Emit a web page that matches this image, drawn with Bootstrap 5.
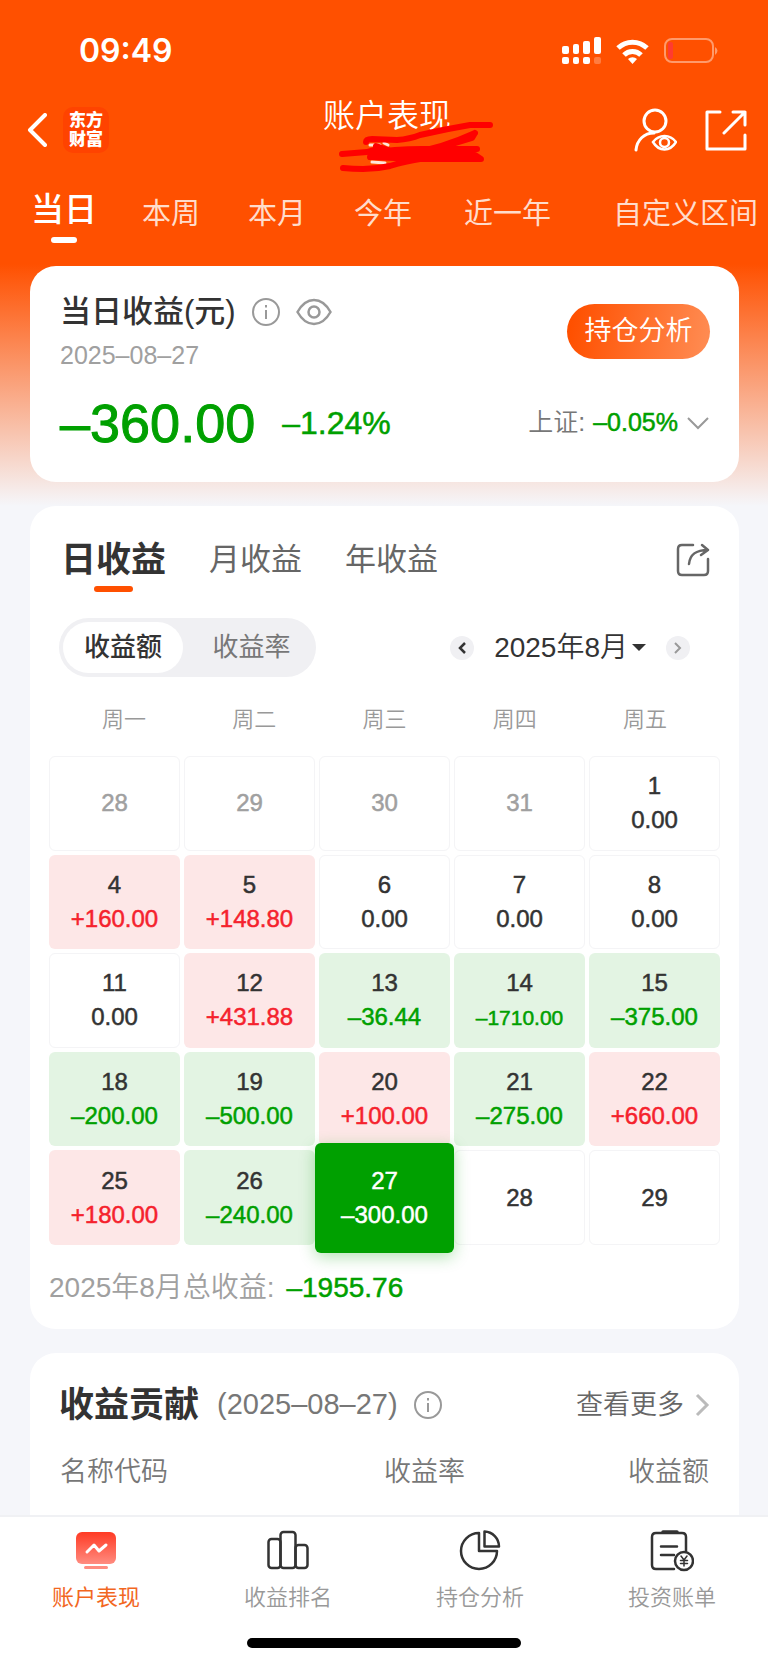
<!DOCTYPE html>
<html lang="zh-CN">
<head>
<meta charset="utf-8">
<meta name="viewport" content="width=device-width, initial-scale=1">
<title>账户表现</title>
<link href="https://cdn.jsdelivr.net/npm/bootstrap@5.3.0/dist/css/bootstrap.min.css" rel="stylesheet">
<style>
  :root { --brand:#ff5000; --up:#f5222d; --down:#00a000; --ink:#333; --soft:#777; --mute:#a0a0a0; }
  body { font-family:"Liberation Sans","Noto Sans CJK SC",sans-serif; color:var(--ink); background:#f5f6fa; }
  svg { display:block; flex:none; fill:none; stroke:currentColor; }
  svg.tone-mid { color:#999; }
  svg.tone-pale { color:#bbb; }
  svg.tone-red { color:#f00; }
  button, .page a { color:inherit; background:none; border:0; padding:0; text-decoration:none; }
  .page { background:linear-gradient(180deg,var(--brand) 0,var(--brand) 264px,#f5f6fa 506px); }

  .status { height:102px; padding:0 50px 0 79px; }
  .signals { gap:15px; }
  .signals .cell-bars { stroke:none; fill:#fff; }
  .clock { font:600 32px/40px Inter,sans-serif; }
  .titlebar { height:88px; padding:0 21px 0 27px; margin-top:-16px; }
  .brand-logo { width:46px; height:46px; border-radius:10px; background:#ff4300; font-weight:900; font-size:17px; line-height:19px; }
  .page-title { font-size:32px; line-height:40px; font-weight:350; }
  .subtitle { height:28px; position:relative; }
  .subtitle svg { position:absolute; left:50%; top:-18px; margin-left:-49px; }

  .range { padding:14px 7px 23px 31px; gap:42px; font-size:29px; line-height:40px; font-weight:350; }
  .range button { padding:0 3px 4px; color:#ffdccb; }
  .range button.active { padding:2px 0 0; color:#fff; font-size:33px; font-weight:500; }
  .bar-mark { height:6px; border-radius:3px; background:currentColor; }
  .range .bar-mark { width:26px; margin:7px auto 0; }

  .panel { background:#fff; border-radius:26px; }
  .panels { padding:0 29px 0 30px; gap:24px; }
  .fs-date { font-size:25px; line-height:30px; color:var(--mute); }
  .down { color:var(--down); }
  .firm { -webkit-text-stroke:1px currentColor; }
  .semi { -webkit-text-stroke:.5px currentColor; }
  .summary { padding:26px 29px 27px 30px; }
  .summary h1 { font-size:31px; line-height:40px; font-weight:500; }
  .summary .figures { margin-top:21px; gap:27px; }
  .summary .total { font-size:54px; line-height:64px; }
  .summary .rate { font-size:32px; }
  .summary .index { font-size:25px; font-weight:350; color:var(--soft); }
  .summary .cta { width:143px; height:55px; border-radius:28px; color:#fff; font-size:27px; font-weight:350; background:linear-gradient(100deg,var(--brand) 5%,#ff8a50 95%); }

  .calendar { padding:32px 19px 20px; }
  .kind { padding:0 10px 0 12px; gap:43px; font-size:31px; line-height:44px; color:#666; font-weight:350; }
  .kind .active { font-size:35px; font-weight:700; color:var(--ink); }
  .kind .bar-mark { width:39px; margin:4px auto 0; background:var(--brand); }
  .controls { padding:26px 30px 0 10px; }
  .switch { width:257px; height:59px; padding:4px; border-radius:30px; background:#f0f0f3; font-size:26px; color:var(--soft); font-weight:350; }
  .switch .active { width:120px; background:#fff; border-radius:26px; color:var(--ink); font-weight:500; }
  .month { font-size:28px; line-height:40px; font-weight:350; }
  .step { width:24px; height:24px; border-radius:50%; background:#f0f0f3 !important; }
  .week { padding:27px 10px 0; font-size:22px; line-height:32px; color:#999; font-weight:350; }
  .week, .days { display:grid; grid-template-columns:repeat(5,1fr); }
  .days { margin-top:20px; height:489px; gap:4px; grid-auto-rows:1fr; font-size:24px; line-height:34px; }
  .days button { border-radius:6px; -webkit-text-stroke:.5px currentColor; }
  .days .flat { border:1px solid #f4f4f6; }
  .days .other { color:var(--mute); }
  .days .gain { background:#fde7e7; }
  .days .loss { background:#e3f4e3; }
  .days .gain span { color:var(--up); }
  .days .loss span { color:var(--down); }
  .days .tight span { font-size:21px; }
  .days .today { background:var(--down); color:#fff; margin:-7px -4px -8px; z-index:1; box-shadow:0 4px 16px rgba(0,160,0,.3); }
  .sum-line { font-size:28px; line-height:42px; margin-top:22px; color:var(--mute); font-weight:350; }

  .contrib { padding:30px 29px 20px 29px; border-radius:26px 26px 0 0; }
  .contrib h2 { font-size:35px; line-height:44px; font-weight:700; }
  .contrib .when { font-size:29px; color:var(--soft); margin-left:18px; }
  .contrib .more { font-size:27px; color:#666; font-weight:350; }
  .contrib table { font-size:27px; line-height:40px; color:var(--soft); margin-top:24px; table-layout:fixed; }
  .contrib th { font-weight:350; }
  .contrib th.mid { padding-left:108px; }

  .tabbar { background:#fff; border-top:2px solid #f0f1f4; padding:11px 0 16px; }
  .tabbar a { font-size:22px; line-height:32px; color:#999; font-weight:350; gap:10px; }
  .tabbar a svg { color:#333; }
  .tabbar a.active { color:#f2671f; font-weight:400; }
  .home-bar { width:274px; height:10px; border-radius:5px; background:#000; margin:24px auto 0; }
</style>
</head>
<body>
<div class="page min-vh-100 d-flex flex-column">
  <header class="text-white">
    <div class="status d-flex align-items-center justify-content-between">
      <span class="clock">09:49</span>
      <div class="signals d-flex align-items-center">
        <svg class="cell-bars" width="39" height="28" viewBox="0 0 39 28"><rect x="0" y="9" width="7" height="8" rx="2"/><rect x="11" y="7" width="6" height="10" rx="2"/><rect x="21" y="4" width="7" height="13" rx="2"/><rect x="32" y="0" width="7" height="17" rx="2"/><rect x="0" y="20" width="7" height="7" rx="2"/><rect x="11" y="20" width="6" height="7" rx="2"/><rect x="21" y="20" width="7" height="7" rx="2"/><rect x="32" y="20" width="7" height="7" rx="2" opacity=".25"/></svg>
        <svg width="33" height="25" viewBox="0 0 33 25" stroke-width="5"><path d="M2 9a21 21 0 0 1 29 0M8 16a12 12 0 0 1 17 0"/><path d="M12 20a6.500 6.500 0 0 1 9 0l-4.500 5z" fill="#fff" stroke="none"/></svg>
        <svg width="54" height="26" viewBox="0 0 54 26"><rect x="1" y="1" width="48" height="23" rx="7" stroke="#ff9a6b" stroke-width="2"/><rect x="4" y="4" width="5" height="17" rx="2" fill="#ff3b30" stroke="none"/><path d="M51 9q5 3.500 0 8z" fill="#ff9a6b" stroke="none"/></svg>
      </div>
    </div>
    <div class="titlebar row g-0 align-items-center">
      <div class="col d-flex align-items-center gap-3">
        <button aria-label="返回"><svg width="20" height="34" viewBox="0 0 20 34" stroke-width="4" stroke-linecap="round" stroke-linejoin="round"><path d="M18 2 3 17l15 15"/></svg></button>
        <div class="brand-logo d-flex flex-column align-items-center justify-content-center"><span>东方</span><span>财富</span></div>
      </div>
      <div class="col-auto text-center">
        <div class="page-title">账户表现</div>
        <div class="subtitle"><svg class="tone-red" width="156" height="58" viewBox="0 0 156 58" stroke-width="6" stroke-linecap="round" stroke-linejoin="round"><path d="M32 27h10M46 25l4 2M34 44l13 1" stroke="#ffe6dc" stroke-width="3"/><path d="M28 24q0-3 6-3l25 1Q72 21 82 17q26-6 50-10h20"/><path d="M4 36l25-2 10-3M38 28l12 4"/><path d="M137 15l-3 5Q100 31 72 35q30-4 65-20" stroke-width="6"/><path d="M32 35q24-4 52-4h55M32 39l50 2 61 0-6-4-97-2" stroke-width="6"/><path d="M5 50q10 1 20 1 14 0 27-3 16-5 30-7"/></svg></div>
      </div>
      <div class="col d-flex justify-content-end gap-4">
        <button class="me-1" aria-label="账户查看"><svg width="44" height="44" viewBox="0 0 44 44" stroke-width="3" stroke-linecap="round"><circle cx="22" cy="13" r="11"/><path d="M3 42c1-10 8-17 18-17"/><path d="M20 34c6-8 17-8 23 0-6 10-17 10-23 0z" stroke-width="2.500"/><circle cx="31.500" cy="34.500" r="4.500" stroke-width="2.500"/></svg></button>
        <button aria-label="分享"><svg width="42" height="42" viewBox="0 0 42 42" stroke-width="3" stroke-linecap="round" stroke-linejoin="round"><path d="M15 3H2v37h38V26M28 3h12v13M40 3 19 24"/></svg></button>
      </div>
    </div>
    <nav class="range d-flex align-items-center text-nowrap">
      <button class="active">当日<div class="bar-mark"></div></button>
      <button>本周</button><button>本月</button><button>今年</button><button class="ms-1">近一年</button>
      <button class="ms-auto">自定义区间</button>
    </nav>
  </header>

  <main class="panels d-flex flex-column flex-grow-1">
    <section class="panel summary">
      <div class="d-flex justify-content-between">
        <div>
          <div class="d-flex align-items-center">
            <h1 class="m-0">当日收益(元)</h1>
            <svg class="tone-mid ms-3" width="28" height="28" viewBox="0 0 28 28" stroke-width="2"><circle cx="14" cy="14" r="13"/><path d="M14 12v9M14 7v2.500"/></svg>
            <svg class="tone-mid ms-3" width="36" height="28" viewBox="0 0 36 28" stroke-width="2.500"><path d="M1.500 14C6 6 11 2 18 2s12 4 16.500 12C30 22 25 26 18 26S6 22 1.500 14z"/><circle cx="18" cy="14" r="5.500"/></svg>
          </div>
          <div class="fs-date mt-2">2025–08–27</div>
        </div>
        <button class="cta align-self-center">持仓分析</button>
      </div>
      <div class="figures d-flex align-items-center">
        <span class="total down firm">–360.00</span>
        <span class="rate down semi">–1.24%</span>
        <button class="index d-flex align-items-center ms-auto">上证:<span class="down semi ms-2 me-2">–0.05%</span><svg class="tone-mid" width="24" height="14" viewBox="0 0 24 14" stroke-width="2"><path d="m2 2 10 10L22 2"/></svg></button>
      </div>
    </section>

    <section class="panel calendar">
      <div class="kind d-flex align-items-start">
        <button class="active">日收益<div class="bar-mark"></div></button>
        <button>月收益</button>
        <button>年收益</button>
        <button class="ms-auto mt-1" aria-label="分享收益"><svg width="34" height="36" viewBox="0 0 34 36" stroke-width="2.500" stroke-linecap="round" stroke-linejoin="round"><path d="M17 3H6Q2 3 2 7v22q0 4 4 4h22q4 0 4-4V17"/><path d="M13 22C14 12 20 8 32 8M26 3l6 5-7 5"/></svg></button>
      </div>
      <div class="controls d-flex align-items-center justify-content-between">
        <div class="switch d-flex"><button class="active">收益额</button><button class="flex-fill ps-2">收益率</button></div>
        <div class="d-flex align-items-center">
          <button class="step d-flex align-items-center justify-content-center" aria-label="上个月"><svg width="8" height="12" viewBox="0 0 8 12" stroke-width="2.500"><path d="M7 1 2 6l5 5"/></svg></button>
          <button class="month d-flex align-items-center ms-3 px-1">2025年8月<svg class="ms-1" width="14" height="8" viewBox="0 0 14 8"><path d="M0 0h14L7 7z" fill="#333" stroke="none"/></svg></button>
          <button class="step d-flex align-items-center justify-content-center ms-3" aria-label="下个月"><svg class="tone-mid" width="8" height="12" viewBox="0 0 8 12" stroke-width="2"><path d="m1 1 5 5-5 5"/></svg></button>
        </div>
      </div>
      <div class="week text-center"><span>周一</span><span>周二</span><span>周三</span><span>周四</span><span>周五</span></div>
      <div class="days">
        <button class="flat other">28</button><button class="flat other">29</button><button class="flat other">30</button><button class="flat other">31</button><button class="flat">1<br><span>0.00</span></button>
        <button class="gain">4<br><span>+160.00</span></button><button class="gain">5<br><span>+148.80</span></button><button class="flat">6<br><span>0.00</span></button><button class="flat">7<br><span>0.00</span></button><button class="flat">8<br><span>0.00</span></button>
        <button class="flat">11<br><span>0.00</span></button><button class="gain">12<br><span>+431.88</span></button><button class="loss">13<br><span>–36.44</span></button><button class="loss tight">14<br><span>–1710.00</span></button><button class="loss">15<br><span>–375.00</span></button>
        <button class="loss">18<br><span>–200.00</span></button><button class="loss">19<br><span>–500.00</span></button><button class="gain">20<br><span>+100.00</span></button><button class="loss">21<br><span>–275.00</span></button><button class="gain">22<br><span>+660.00</span></button>
        <button class="gain">25<br><span>+180.00</span></button><button class="loss">26<br><span>–240.00</span></button><button class="today">27<br><span>–300.00</span></button><button class="flat">28</button><button class="flat">29</button>
      </div>
      <div class="sum-line">2025年8月总收益: <span class="down semi ms-1">–1955.76</span></div>
    </section>

    <section class="panel contrib flex-grow-1">
      <div class="d-flex align-items-center">
        <h2 class="m-0">收益贡献</h2>
        <span class="when">(2025–08–27)</span>
        <svg class="tone-mid ms-3" width="28" height="28" viewBox="0 0 28 28" stroke-width="2"><circle cx="14" cy="14" r="13"/><path d="M14 12v9M14 7v2.500"/></svg>
        <a href="#" class="more d-flex align-items-center ms-auto">查看更多<svg class="tone-pale ms-2" width="18" height="24" viewBox="0 0 18 24" stroke-width="3"><path d="m5 2 10 10L5 22"/></svg></a>
      </div>
      <table class="w-100"><thead><tr><th scope="col" class="text-start">名称代码</th><th scope="col" class="mid text-start">收益率</th><th scope="col" class="text-end">收益额</th></tr></thead></table>
    </section>
  </main>

  <footer class="tabbar sticky-bottom">
    <nav class="row g-0">
      <a href="#" class="active col d-flex flex-column align-items-center"><svg width="44" height="44" viewBox="0 0 44 44"><defs><linearGradient id="g" x2="0" y2="1"><stop stop-color="#ff3a24"/><stop offset="1" stop-color="#ff8c80"/></linearGradient></defs><rect x="2" y="4" width="40" height="32" rx="6" fill="url(#g)" stroke="none"/><path d="m13 24 7-7 5 6 7-6" stroke="#fff" stroke-width="3" stroke-linecap="round" stroke-linejoin="round"/><path d="M11.500 39.500h21" stroke="#ff8c80" stroke-width="3" stroke-linecap="round"/></svg>账户表现</a>
      <a href="#" class="col d-flex flex-column align-items-center"><svg width="44" height="44" viewBox="0 0 44 44" stroke-width="2.500"><rect x="2.500" y="11" width="12" height="29" rx="3"/><rect x="14.500" y="4" width="15" height="36" rx="3"/><rect x="29.500" y="17" width="12" height="23" rx="3"/></svg>收益排名</a>
      <a href="#" class="col d-flex flex-column align-items-center"><svg width="44" height="44" viewBox="0 0 44 44" stroke-width="2.500" stroke-linejoin="round"><path d="M21 5a18 18 0 1 0 18 18H21z"/><path d="M26.500 3.500v15H41A15 15 0 0 0 26.500 3.500z"/></svg>持仓分析</a>
      <a href="#" class="col d-flex flex-column align-items-center"><svg width="44" height="44" viewBox="0 0 44 44" stroke-width="2.500" stroke-linecap="round"><path d="M36 23V9q0-4-4-4H6Q2 5 2 9v28q0 4 4 4h18M11 18.500h16M11 27h13"/><path d="M13 4h14" stroke-width="3.500"/><circle cx="34" cy="33" r="9"/><path d="m31 28 3 4 3-4M34 32v6M30.500 32.500h7M30.500 35.500h7" stroke-width="1.500"/></svg>投资账单</a>
    </nav>
    <div class="home-bar"></div>
  </footer>
</div>
<script src="https://cdn.jsdelivr.net/npm/bootstrap@5.3.0/dist/js/bootstrap.bundle.min.js"></script>
</body>
</html>
